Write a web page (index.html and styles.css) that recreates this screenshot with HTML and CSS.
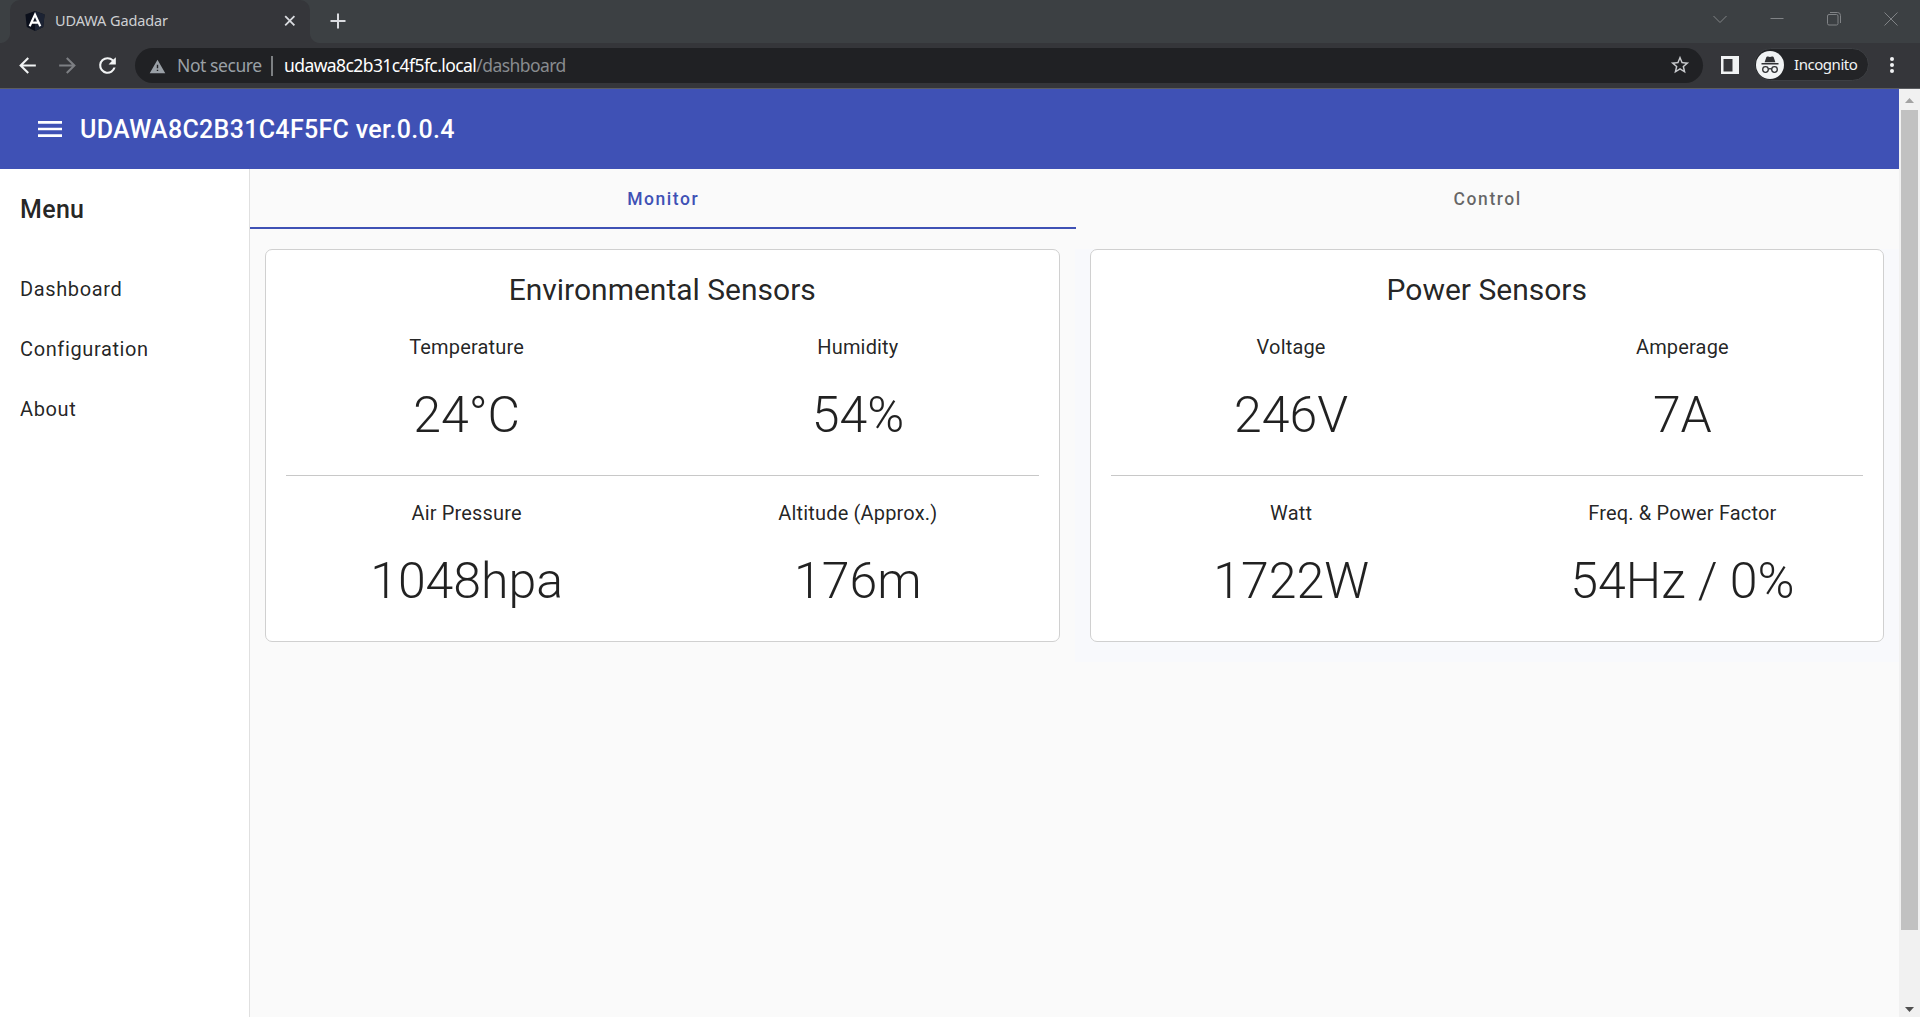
FILE: index.html
```html
<!DOCTYPE html>
<html lang="en">
<head>
<meta charset="utf-8">
<title>UDAWA Gadadar</title>
<link rel="stylesheet" href="styles.css">
</head>
<body>
<div class="browser">
  <div class="tabstrip">
    <div class="browser-tab">
      <svg class="favicon" viewBox="0 0 20 20"><path fill="#0b0f1b" d="M10 0 19.6 3.4 18.2 16 10 20 1.8 16 .4 3.4z"/><path fill="#1c2333" d="M10 0 19.6 3.4 18.2 16 10 20z"/><path fill="none" stroke="#fff" stroke-width="2.2" d="M4.7 15.2 10 3.6l5.3 11.6M6.8 11.6h6.4"/></svg>
      <span class="tab-title">UDAWA Gadadar</span>
      <svg class="tab-close" viewBox="0 0 12 12"><path d="M1.2 1.2l9.2 9.2M10.4 1.2 1.2 10.4"/></svg>
    </div>
    <svg class="new-tab" viewBox="0 0 16 16"><path d="M8 .5v15M.5 8h15"/></svg>
    <div class="window-controls">
      <svg viewBox="0 0 14 14"><path d="M.5 4 7 10.5 13.500 4"/></svg>
      <svg viewBox="0 0 14 14"><path d="M.5 6.500h13"/></svg>
      <svg viewBox="0 0 14 14"><rect x=".5" y="2.500" width="10.500" height="10.500" rx="1.500"/><path d="M3 .500h7.500a3 3 0 0 1 3 3V11"/></svg>
      <svg viewBox="0 0 14 14"><path d="M.5.5l13 13M13.500.5l-13 13"/></svg>
    </div>
  </div>
  <div class="toolbar">
    <svg class="nav" viewBox="0 0 24 24"><path d="M20 11H7.830l5.590-5.590L12 4l-8 8 8 8 1.410-1.410L7.830 13H20v-2z"/></svg>
    <svg class="nav nav-disabled" viewBox="0 0 24 24"><path d="M12 4l-1.410 1.410L16.170 11H4v2h12.170l-5.580 5.590L12 20l8-8z"/></svg>
    <svg class="nav" viewBox="0 0 24 24"><path d="M17.650 6.350A7.950 7.950 0 0 0 12 4a8 8 0 1 0 7.730 10h-2.080A6 6 0 1 1 12 6c1.660 0 3.140.690 4.220 1.780L13 11h7V4l-2.350 2.350z"/></svg>
    <div class="omnibox">
      <svg class="warn" viewBox="0 0 24 21"><path d="M1 20h22L12 1 1 20zm12-3h-2v-2h2v2zm0-4h-2V8h2v5z"/></svg>
      <span class="insecure">Not secure</span>
      <span class="separator"></span>
      <span class="host">udawa8c2b31c4f5fc.local</span><span class="path">/dashboard</span>
      <svg class="star" viewBox="0 0 24 24"><path d="M22 9.240l-7.190-.620L12 2 9.190 8.630 2 9.240l5.460 4.730L5.820 21 12 17.270 18.180 21l-1.630-7.030L22 9.240zM12 15.400l-3.760 2.270 1-4.280-3.320-2.880 4.380-.380L12 6.100l1.710 4.040 4.380.380-3.320 2.880 1 4.280L12 15.400z"/></svg>
    </div>
    <svg class="side-panel" viewBox="0 0 18 18"><path fill-rule="evenodd" d="M0 0h18v18H0zM2.500 3v12.500H11.500V3z"/></svg>
    <div class="incognito">
      <svg viewBox="0 0 28 28"><circle cx="14" cy="14" r="14" fill="#f1f3f4"/><path fill="#303134" d="M10.300 6.200c.3-.8 1-.9 1.700-.6 1.300.6 2.700.6 4 0 .7-.3 1.400-.2 1.700.6l1.700 5h-10.800zM5.500 12h17v1.400h-17z"/><g fill="none" stroke="#303134" stroke-width="1.300"><circle cx="9.500" cy="18.500" r="2.800"/><circle cx="18.500" cy="18.500" r="2.800"/><path d="M12.300 18.200q1.700-1 3.400 0"/></g></svg>
      <span>Incognito</span>
    </div>
    <svg class="kebab" viewBox="0 0 4 18"><circle cx="2" cy="3" r="2"/><circle cx="2" cy="9" r="2"/><circle cx="2" cy="15" r="2"/></svg>
  </div>
  <div class="viewport">
    <div class="page">
      <header class="appbar">
        <svg class="menu-icon" viewBox="0 0 24 24"><path d="M3 18h18v-2H3v2zm0-5h18v-2H3v2zm0-7v2h18V6H3z"/></svg>
        <h1>UDAWA8C2B31C4F5FC ver.0.0.4</h1>
      </header>
      <div class="body">
        <nav class="sidebar">
          <h2>Menu</h2>
          <a>Dashboard</a>
          <a>Configuration</a>
          <a>About</a>
        </nav>
        <main class="content">
          <div class="tabs">
            <div class="tab tab-active">Monitor</div>
            <div class="tab">Control</div>
          </div>
          <div class="columns">
            <div class="column">
              <section class="card">
                <h3>Environmental Sensors</h3>
                <div class="readings">
                  <div class="reading"><div class="label">Temperature</div><div class="value">24°C</div></div>
                  <div class="reading"><div class="label">Humidity</div><div class="value">54%</div></div>
                </div>
                <div class="divider"></div>
                <div class="readings">
                  <div class="reading"><div class="label">Air Pressure</div><div class="value">1048hpa</div></div>
                  <div class="reading"><div class="label">Altitude (Approx.)</div><div class="value">176m</div></div>
                </div>
              </section>
            </div>
            <div class="column column-tinted">
              <section class="card">
                <h3>Power Sensors</h3>
                <div class="readings">
                  <div class="reading"><div class="label">Voltage</div><div class="value">246V</div></div>
                  <div class="reading"><div class="label">Amperage</div><div class="value">7A</div></div>
                </div>
                <div class="divider"></div>
                <div class="readings">
                  <div class="reading"><div class="label">Watt</div><div class="value">1722W</div></div>
                  <div class="reading"><div class="label">Freq. &amp; Power Factor</div><div class="value">54Hz / 0%</div></div>
                </div>
              </section>
            </div>
          </div>
        </main>
      </div>
    </div>
    <div class="scrollbar">
      <svg class="arrow-up" viewBox="0 0 9 5"><path d="M0 5 4.500 0 9 5z"/></svg>
      <div class="thumb"></div>
      <svg class="arrow-down" viewBox="0 0 9 5"><path d="M0 0h9L4.500 5z"/></svg>
    </div>
  </div>
</div>
</body>
</html>
```

FILE: styles.css
```css
* { box-sizing: border-box; }
body { margin: 0; font-family: Roboto, sans-serif; color: rgba(0, 0, 0, .87); overflow: hidden; }
h1, h2, h3 { margin: 0; }
svg { display: block; flex: none; }

.browser { display: flex; flex-direction: column; width: 1920px; height: 1017px; }

/* Browser chrome */
.tabstrip, .toolbar { font-family: "Noto Sans", sans-serif; white-space: nowrap; }
.tabstrip { display: flex; height: 43px; flex: none; background: #3c4043; padding-left: 10px; }
.browser-tab { position: relative; display: flex; width: 300px; height: 43px; padding: 0 14px 0 15px; background: #35363a; border-radius: 10px 10px 0 0; }
.browser-tab::before, .browser-tab::after { content: ""; position: absolute; bottom: 0; width: 10px; height: 10px; }
.browser-tab::before { left: -10px; background: radial-gradient(circle at 0 0, transparent 9.500px, #35363a 10.500px); }
.browser-tab::after { right: -10px; background: radial-gradient(circle at 100% 0, transparent 9.500px, #35363a 10.500px); }
.favicon { width: 20px; height: 20px; margin-top: 11px; }
.tab-title { margin-left: 10px; font-size: 14.500px; line-height: 41px; letter-spacing: -.1px; color: #ced0d3; flex: 1; }
.tab-close { width: 12px; height: 12px; margin-top: 15px; fill: none; stroke: #dadce0; stroke-width: 1.800; }
.new-tab { width: 16px; height: 16px; margin: 13px 0 0 20px; fill: none; stroke: #dadce0; stroke-width: 2; }
.window-controls { display: flex; gap: 43px; margin: 12px 22px 0 auto; }
.window-controls svg { width: 14px; height: 14px; fill: none; stroke: #808386; stroke-width: 1; }

.toolbar { display: flex; height: 46px; flex: none; background: #35363a; border-bottom: 1px solid #5b5d61; padding-left: 15px; }
.nav { width: 25px; height: 25px; margin: 10px 15px 0 0; fill: #f1f3f4; }
.nav-disabled { fill: #7d7f83; }
.omnibox { display: flex; width: 1568px; height: 35px; margin-top: 5px; padding: 0 14px 0 14px; background: #202124; border-radius: 18px; line-height: 35px; font-size: 17.500px; color: #9aa0a6; }
.warn { width: 17px; height: 15px; margin-top: 11px; fill: #9aa0a6; }
.insecure { width: 94px; padding-left: 11px; letter-spacing: -.42px; }
.separator { width: 2px; height: 20px; margin: 8px 11px 0 11px; background: #7d8083; }
.host { color: #fff; letter-spacing: -.58px; }
.path { letter-spacing: -.55px; color: #888b8f; }
.star { width: 22px; height: 22px; margin: 6px -2px 0 auto; fill: #c8cacd; }
.side-panel { width: 18px; height: 18px; margin: 13px 0 0 18px; fill: #f1f3f4; }
.incognito { display: flex; width: 115px; height: 33px; margin: 5px 0 0 15px; padding: 2px 0 0 1px; background: #232427; border: 1px solid #3d3f43; border-radius: 17px; color: #f1f3f4; font-size: 15px; line-height: 26px; letter-spacing: -.45px; }
.incognito svg { width: 28px; height: 28px; margin-right: 10px; }
.kebab { width: 4px; height: 18px; margin: 13px 0 0 21px; fill: #f1f3f4; }

.viewport { display: flex; flex: 1; min-height: 0; }
.page { display: flex; flex-direction: column; flex: 1; background: #fafafa; }
.scrollbar { display: flex; flex-direction: column; align-items: center; width: 21px; background: #f1f1f1; }
.arrow-up { width: 9px; height: 5px; margin-top: 9px; fill: #a3a3a3; }
.thumb { width: 17px; height: 820px; margin-top: 7px; background: #c1c1c1; }
.arrow-down { width: 9px; height: 5px; margin: auto 0 5px; fill: #505050; }

/* Application */
.appbar { display: flex; align-items: center; height: 80px; flex: none; padding-left: 34px; background: #3f51b5; color: #fff; }
.menu-icon { width: 32px; height: 32px; margin-right: 14px; fill: #fff; }
.appbar h1 { padding-top: 2px; font-size: 25px; font-weight: 500; line-height: 40px; letter-spacing: .0125em; }
.body { display: flex; flex: 1; }
.sidebar { width: 250px; flex: none; padding: 21px 20px 0; background: #fff; border-right: 1px solid #e0e0e0; }
.sidebar h2 { height: 69px; font-size: 25px; font-weight: 500; line-height: 40px; letter-spacing: .0125em; }
.sidebar a { display: block; height: 60px; line-height: 60px; font-size: 20px; letter-spacing: .03125em; }
.content { flex: 1; }
.tabs { display: flex; height: 60px; }
.tab { flex: 1 1 auto; text-align: center; font-size: 17.500px; font-weight: 500; line-height: 60px; letter-spacing: .0893em; color: rgba(0, 0, 0, .6); }
.tab-active { color: #3f51b5; border-bottom: 2px solid #3f51b5; }
.columns { display: grid; grid-template-columns: 1fr 1fr; padding-top: 20px; }
.column { padding: 0 15px 20px; }
.column-tinted { background: #f8f9fc; }
.card { height: 393px; padding: 20px; background: #fff; border: 1px solid #d0d0d0; border-radius: 7px; }
.card h3 { font-size: 30px; font-weight: 400; line-height: 40px; text-align: center; }
.readings { display: grid; grid-template-columns: 1fr 1fr; column-gap: 30px; height: 165px; text-align: center; }
.label { padding-top: 22px; font-size: 20px; line-height: 30px; letter-spacing: .17px; }
.value { padding-top: 23px; font-size: 50px; font-weight: 300; line-height: 60px; }
.divider { height: 1px; background: #c8c8c8; }
```
